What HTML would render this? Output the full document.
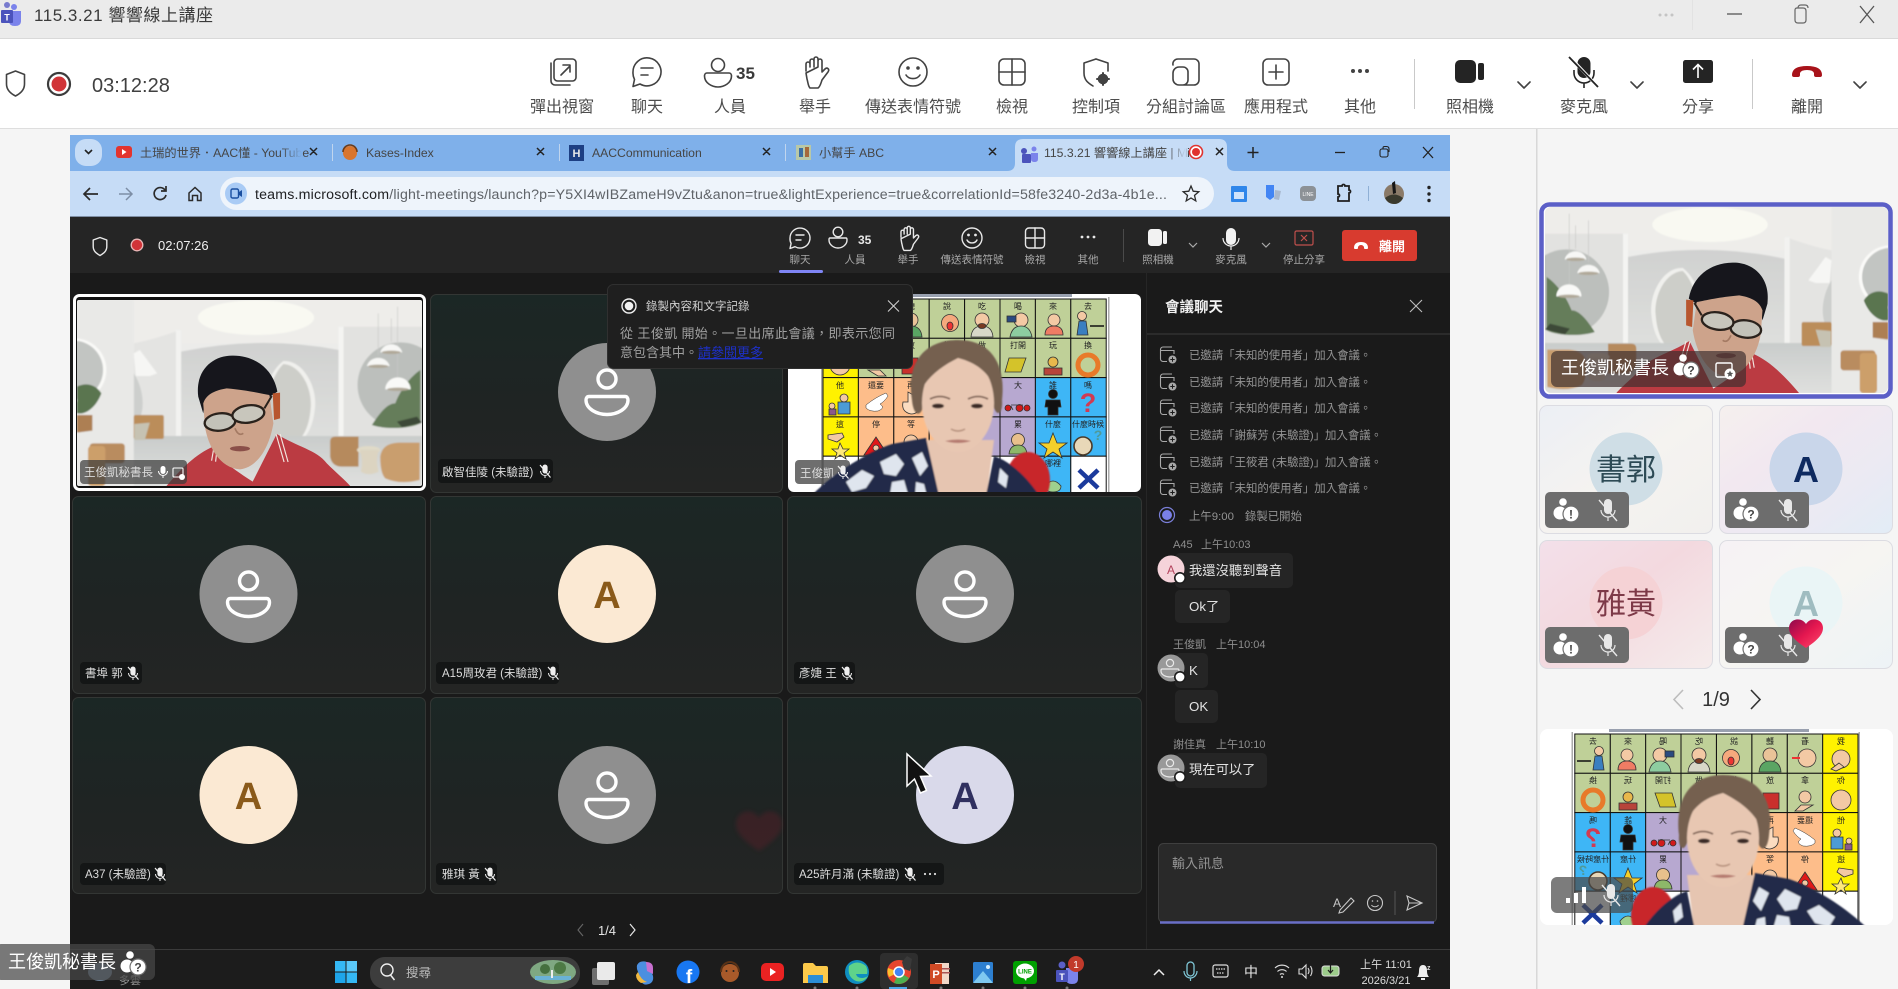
<!DOCTYPE html>
<html lang="zh-Hant"><head><meta charset="utf-8"><title>115.3.21 響響線上講座</title>
<style>
html,body{margin:0;padding:0;width:1898px;height:989px;overflow:hidden;background:#f5f5f5}
svg{display:block;font-family:"Liberation Sans","Noto Sans CJK TC",sans-serif}
.l{font-size:16px;fill:#4d4d4d;text-anchor:middle}
.d{font-size:10.5px;fill:#a9a9a9;text-anchor:middle}
.i{fill:none;stroke:#424242;stroke-width:1.6;stroke-linecap:round;stroke-linejoin:round}
.w{fill:none;stroke:#e8e8e8;stroke-width:1.4;stroke-linecap:round;stroke-linejoin:round}
.t{font-size:12.2px;fill:#454545}
.n{font-size:11.5px;fill:#dcdcdc}
.s{font-size:11.4px;fill:#949494}
.h{font-size:11px;fill:#8e8e8e}
.m{font-size:13.3px;fill:#e2e2e2}
.c{font-size:8px;fill:#222;text-anchor:middle}
</style></head><body>
<svg width="1898" height="989" viewBox="0 0 1898 989" xmlns="http://www.w3.org/2000/svg">
<defs>
<linearGradient id="tg" x1="0" y1="0" x2="0" y2="1"><stop offset="0" stop-color="#1b2725"/><stop offset=".55" stop-color="#1f2423"/><stop offset="1" stop-color="#242524"/></linearGradient>
<linearGradient id="fl" x1="0" y1="0" x2="0" y2="1"><stop offset="0" stop-color="#c9cccb"/><stop offset="1" stop-color="#dfe0de"/></linearGradient>
<linearGradient id="wl" x1="0" y1="0" x2="0" y2="1"><stop offset="0" stop-color="#d0d1d0"/><stop offset="1" stop-color="#dedfdd"/></linearGradient>
<linearGradient id="r1" x1="0" y1="0" x2="1" y2="1"><stop offset="0" stop-color="#eceff5"/><stop offset=".5" stop-color="#f5f3f0"/><stop offset="1" stop-color="#f1f0ee"/></linearGradient>
<linearGradient id="r2" x1="0" y1="0" x2="1" y2="1"><stop offset="0" stop-color="#f5f0ee"/><stop offset=".35" stop-color="#f2e8f0"/><stop offset=".7" stop-color="#ebeaf3"/><stop offset="1" stop-color="#e2ecf6"/></linearGradient>
<linearGradient id="r3" x1="0" y1="0" x2="1" y2="1"><stop offset="0" stop-color="#f3e0ea"/><stop offset=".45" stop-color="#f3d9df"/><stop offset="1" stop-color="#f5ecec"/></linearGradient>
<linearGradient id="r4" x1="0" y1="0" x2="1" y2="1"><stop offset="0" stop-color="#f6f2f5"/><stop offset=".5" stop-color="#f6f5f2"/><stop offset="1" stop-color="#edf3f6"/></linearGradient>
<linearGradient id="hg" x1="0" y1="0" x2="1" y2="1"><stop offset="0" stop-color="#8c0a4c"/><stop offset=".5" stop-color="#e4174f"/><stop offset="1" stop-color="#ff4a6c"/></linearGradient>
<linearGradient id="fade" x1="0" y1="0" x2="1" y2="0"><stop offset="0" stop-color="#7fb0ea" stop-opacity="0"/><stop offset="1" stop-color="#7fb0ea"/></linearGradient>
<linearGradient id="fade2" x1="0" y1="0" x2="1" y2="0"><stop offset="0" stop-color="#c6dcf6" stop-opacity="0"/><stop offset="1" stop-color="#c6dcf6"/></linearGradient>
<filter id="b1"><feGaussianBlur stdDeviation="2"/></filter>
<filter id="b2"><feGaussianBlur stdDeviation=".7"/></filter>
<filter id="b3"><feGaussianBlur stdDeviation="2"/></filter>
<clipPath id="c1"><rect x="77" y="300" width="345" height="186" rx="2"/></clipPath>
<clipPath id="c2"><rect x="788" y="294" width="353" height="198" rx="6"/></clipPath>
<clipPath id="c3"><rect x="1540" y="729" width="353" height="196" rx="8"/></clipPath>
<clipPath id="c4"><rect x="1545" y="207" width="343" height="186" rx="6"/></clipPath>

<g id="micoff"><rect x="-2.6" y="-6.5" width="5.2" height="9" rx="2.6" fill="#eee"/><path d="M-4.5,0a4.5,4.5 0 0 0 9,0M0,4.5v2.5" fill="none" stroke="#eee" stroke-width="1"/><path d="M-5,-6L5.5,6.5" stroke="#eee" stroke-width="1.2"/></g>
<g id="micoffb"><rect x="-4" y="-12" width="8" height="15" rx="4" fill="#e8e8e8"/><path d="M-7,-1a7,7 0 0 0 14,0M0,6v4" fill="none" stroke="#e8e8e8" stroke-width="1.2"/><path d="M-9,-11L9,10" stroke="#e8e8e8" stroke-width="1.4"/></g>
<g id="pers"><circle cx="0" cy="-13" r="9" fill="none" stroke="#fff" stroke-width="3.4"/><path d="M-18,4.5H18C20,4.5 21,6 21,8C21,17 10,22.5 0,22.5C-10,22.5 -21,17 -21,8C-21,6 -20,4.5 -18,4.5Z" fill="none" stroke="#fff" stroke-width="3.4"/></g>
<g id="persS"><circle cx="0" cy="-5" r="3.6" fill="none" stroke="#e8e8e8" stroke-width="1.2"/><path d="M-8,1H8C9,1 9,2 9,3C9,7 4,9 0,9C-4,9 -9,7 -9,3C-9,2 -9,1 -8,1Z" fill="none" stroke="#e8e8e8" stroke-width="1.2"/></g>
<g id="pq"><circle cx="-4" cy="-9" r="3.8" fill="#fff"/><circle cx="-7" cy="2" r="6.5" fill="#fff"/><circle cx="4" cy="3" r="8.6" fill="#6f6f6f"/><circle cx="4" cy="3" r="7.4" fill="#fff"/><text x="4" y="7.5" font-size="12" font-weight="700" fill="#444" text-anchor="middle">?</text></g>
<g id="pe"><circle cx="-4" cy="-9" r="3.8" fill="#fff"/><circle cx="-7" cy="2" r="6.5" fill="#fff"/><circle cx="4" cy="3" r="8.6" fill="#6f6f6f"/><circle cx="4" cy="3" r="7.4" fill="#fff"/><text x="4" y="7.5" font-size="12" font-weight="700" fill="#444" text-anchor="middle">!</text></g>
<g id="sys"><path d="M4,-8H-5a2.5,2.5 0 0 0 -2.5,2.5V4a2.5,2.5 0 0 0 2.5,2.5H-1M-7.5,-4.5H6V-1" fill="none" stroke="#a8a8a8" stroke-width="1.1"/><circle cx="4.5" cy="4.5" r="4" fill="#a8a8a8"/><path d="M2.3,4.5h4.4M4.5,2.3v4.4" stroke="#1b1b1b" stroke-width="1"/></g>
<g id="ava"><circle r="13.5" fill="#999"/><use href="#persS" transform="translate(-1,0)"/><circle cx="9" cy="9" r="6" fill="#1c1c1c"/><circle cx="9" cy="9" r="4.4" fill="#fff"/></g>

<symbol id="man" viewBox="22 30 1033 558" preserveAspectRatio="none">
<rect x="22" y="30" width="1033" height="558" fill="#ececea"/>
<g filter="url(#b1)">
<rect x="192" y="30" width="863" height="130" fill="#eeedea"/>
<ellipse cx="558" cy="83" rx="174" ry="52" fill="#f9f9f2"/>
<path d="M192,160C240,150 290,135 334,118V445H192Z" fill="#e4e4e2"/>
<rect x="318" y="120" width="16" height="325" fill="#f2f2f0"/>
<path d="M334,185Q570,135 806,180V440H334Z" fill="url(#wl)"/>
<path d="M540,440C580,330 590,250 640,213C700,210 740,290 735,350Q730,410 705,440Z" fill="#f0f0ed"/>
<path d="M560,440C590,340 600,260 640,222C690,225 725,290 722,350Q718,410 695,440Z" fill="#cdcec9"/>
<path d="M192,250C225,300 230,380 192,405Z" fill="#cdcfcd"/>
<rect x="805" y="110" width="250" height="340" fill="#e2e2e0"/>
<rect x="805" y="110" width="15" height="340" fill="#f4f4f2"/>
<circle cx="990" cy="285" r="128" fill="#bcbfbc"/>
<path d="M905,405C940,350 960,340 975,340C990,300 1020,260 1050,240V400C1020,415 950,420 905,405Z" fill="#657d5a"/>
<path d="M980,395l60,-15l15,18l-60,14z" fill="#3d4a38"/>
<path d="M924,70V195M963,85V155M982,50V265" stroke="#c9c9c7" stroke-width="2"/>
<path d="M890,228a35,32 0 0 1 68,0z" fill="#f7f7f5"/><ellipse cx="924" cy="229" rx="30" ry="5" fill="#b0a898"/>
<path d="M930,187a34,32 0 0 1 66,0z" fill="#f7f7f5"/><ellipse cx="963" cy="187" rx="28" ry="5" fill="#b0a898"/>
<path d="M945,298a38,36 0 0 1 76,0z" fill="#f9f9f7"/><ellipse cx="983" cy="298" rx="32" ry="5" fill="#b0a898"/>
<rect x="22" y="30" width="170" height="558" fill="#e9e9e7"/>
<circle cx="15" cy="240" r="95" fill="#fafaf8"/>
<circle cx="12" cy="240" r="88" fill="#c2c5c2"/>
<path d="M22,290C50,275 80,285 95,310C80,350 50,375 22,370Z" fill="#5a7550"/>
<path d="M22,375H68V422L22,428Z" fill="#ad7f52"/>
<path d="M192,190L210,180L262,250L240,258H198Z" fill="#f6f6f4"/>
<rect x="192" y="438" width="863" height="150" fill="url(#fl)"/>
<rect x="192" y="375" width="90" height="72" rx="6" fill="#bb8d5a"/>
<path d="M194,402L240,398L225,450H194Z" fill="#c6c2b2"/>
<path d="M780,455Q780,440 795,440H865V530H815Q785,530 780,500Z" fill="#b68a5d"/>
<ellipse cx="895" cy="480" rx="35" ry="12" fill="#e0dac8"/><path d="M868,480Q880,510 872,545Q895,560 925,545Q915,510 926,480Z" fill="#dcd4c1"/>
<path d="M930,500Q935,460 985,458H1048V570Q990,585 945,565Q930,550 930,500Z" fill="#c99e6e"/>
<rect x="60" y="460" width="105" height="60" rx="10" fill="#b98c5e"/><rect x="55" y="468" width="52" height="120" rx="10" fill="#cc9f6b"/>
</g>
<g filter="url(#b2)">
<path d="M385,320C375,240 430,195 490,197C560,198 610,240 622,305L600,320C560,330 500,300 450,300C420,310 405,340 400,370Z" fill="#14181e"/>
<path d="M290,588C330,540 380,490 430,470L460,510C480,530 510,550 548,575L620,432C680,470 740,480 770,520C800,550 825,570 840,588Z" fill="#bb3a42"/>
<path d="M425,512L432,472M437,515L442,470M618,432L642,516M630,432L654,516" stroke="#f2e6e0" stroke-width="3.5"/>
<path d="M400,340C410,310 440,300 470,295C530,300 570,310 598,315L610,400C600,460 570,530 510,538C450,535 415,470 405,410Z" fill="#cda38b"/>
<path d="M608,310L630,308L630,385L612,390Z" fill="#b8562f"/>
<ellipse cx="450" cy="396" rx="46" ry="26" fill="#c3c2b9" stroke="#2a211c" stroke-width="7" transform="rotate(-6 450 396)"/>
<ellipse cx="535" cy="372" rx="48" ry="26" fill="#c8c6bc" stroke="#2a211c" stroke-width="7" transform="rotate(-8 535 372)"/>
<path d="M583,355L605,318" stroke="#2a211c" stroke-width="6"/>
<path d="M495,415Q505,440 520,430" fill="none" stroke="#a47a64" stroke-width="5"/>
<ellipse cx="510" cy="476" rx="30" ry="8" fill="#8a5048"/>
</g>
</symbol>

<g id="share">
<rect x="788" y="294" width="353" height="198" fill="#fff"/>
<rect x="872" y="294" width="200" height="3" fill="#55607a" opacity=".6"/>
<rect x="821" y="297" width="1.5" height="195" fill="#aaa"/><rect x="1108" y="297" width="1.5" height="195" fill="#aaa"/>
<g stroke="#111" stroke-width="1">
<rect x="823" y="299" width="35.4" height="39.3" fill="#fff200"/><rect x="858.4" y="299" width="35.4" height="39.3" fill="#bfd098"/><rect x="893.8" y="299" width="35.4" height="39.3" fill="#bfd098"/><rect x="929.2" y="299" width="35.4" height="39.3" fill="#bfd098"/><rect x="964.6" y="299" width="35.4" height="39.3" fill="#bfd098"/><rect x="1000" y="299" width="35.4" height="39.3" fill="#bfd098"/><rect x="1035.4" y="299" width="35.4" height="39.3" fill="#bfd098"/><rect x="1070.8" y="299" width="35.4" height="39.3" fill="#bfd098"/>
<rect x="823" y="338.3" width="35.4" height="39.3" fill="#fff200"/><rect x="858.4" y="338.3" width="35.4" height="39.3" fill="#bfd098"/><rect x="893.8" y="338.3" width="35.4" height="39.3" fill="#bfd098"/><rect x="929.2" y="338.3" width="35.4" height="39.3" fill="#bfd098"/><rect x="964.6" y="338.3" width="35.4" height="39.3" fill="#bfd098"/><rect x="1000" y="338.3" width="35.4" height="39.3" fill="#bfd098"/><rect x="1035.4" y="338.3" width="35.4" height="39.3" fill="#bfd098"/><rect x="1070.8" y="338.3" width="35.4" height="39.3" fill="#bfd098"/>
<rect x="823" y="377.6" width="35.4" height="39.3" fill="#fff200"/><rect x="858.4" y="377.6" width="35.4" height="39.3" fill="#fdbd8a"/><rect x="893.8" y="377.6" width="35.4" height="39.3" fill="#fdbd8a"/><rect x="929.2" y="377.6" width="35.4" height="39.3" fill="#fdbd8a"/><rect x="964.6" y="377.6" width="35.4" height="39.3" fill="#b7a8d0"/><rect x="1000" y="377.6" width="35.4" height="39.3" fill="#b7a8d0"/><rect x="1035.4" y="377.6" width="35.4" height="39.3" fill="#3eb6f6"/><rect x="1070.8" y="377.6" width="35.4" height="39.3" fill="#3eb6f6"/>
<rect x="823" y="416.9" width="35.4" height="39.3" fill="#fff200"/><rect x="858.4" y="416.9" width="35.4" height="39.3" fill="#fdbd8a"/><rect x="893.8" y="416.9" width="35.4" height="39.3" fill="#fdbd8a"/><rect x="929.2" y="416.9" width="35.4" height="39.3" fill="#fdbd8a"/><rect x="964.6" y="416.9" width="35.4" height="39.3" fill="#b7a8d0"/><rect x="1000" y="416.9" width="35.4" height="39.3" fill="#b7a8d0"/><rect x="1035.4" y="416.9" width="35.4" height="39.3" fill="#3eb6f6"/><rect x="1070.8" y="416.9" width="35.4" height="39.3" fill="#3eb6f6"/>
<rect x="823" y="456.2" width="35.4" height="39.3" fill="#fff"/><rect x="858.4" y="456.2" width="35.4" height="39.3" fill="#fff"/><rect x="893.8" y="456.2" width="35.4" height="39.3" fill="#fff"/><rect x="929.2" y="456.2" width="35.4" height="39.3" fill="#fff"/><rect x="964.6" y="456.2" width="35.4" height="39.3" fill="#fff"/><rect x="1000" y="456.2" width="35.4" height="39.3" fill="#fff"/><rect x="1035.4" y="456.2" width="35.4" height="39.3" fill="#3eb6f6"/><rect x="1070.8" y="456.2" width="35.4" height="39.3" fill="#fff"/>
</g>
<g>
<text class="c" x="840" y="309">我</text><text class="c" x="876" y="309">看</text><text class="c" x="911" y="309">聽</text><text class="c" x="947" y="309">說</text><text class="c" x="982" y="309">吃</text><text class="c" x="1018" y="309">喝</text><text class="c" x="1053" y="309">來</text><text class="c" x="1088" y="309">去</text>
<text class="c" x="840" y="348">你</text><text class="c" x="876" y="348">拿</text><text class="c" x="911" y="348">放</text><text class="c" x="947" y="348">想</text><text class="c" x="982" y="348">做</text><text class="c" x="1018" y="348">打開</text><text class="c" x="1053" y="348">玩</text><text class="c" x="1088" y="348">換</text>
<text class="c" x="840" y="388">他</text><text class="c" x="876" y="388">還要</text><text class="c" x="911" y="388">再</text><text class="c" x="1018" y="388">大</text><text class="c" x="1053" y="388">誰</text><text class="c" x="1088" y="388">嗎</text>
<text class="c" x="840" y="427">這</text><text class="c" x="876" y="427">停</text><text class="c" x="911" y="427">等</text><text class="c" x="1018" y="427">累</text><text class="c" x="1053" y="427">什麼</text><text class="c" x="1088" y="427" font-size="7">什麼時候</text>
<text class="c" x="1053" y="466">哪裡</text>
</g>
<g stroke="#333" stroke-width=".8">
<circle cx="840" cy="324" r="9" fill="#f3c9a4"/><path d="M842,328l8,6l-5,2l-8,-4z" fill="#f3c9a4"/>
<circle cx="874" cy="323" r="9" fill="#f3c9a4"/><path d="M881,323h8" stroke="#e33" stroke-width="2"/>
<circle cx="911" cy="320" r="7" fill="#e9c398"/><path d="M900,337q1,-11 11,-11q10,0 11,11z" fill="#5aa563"/>
<circle cx="950" cy="323" r="8.5" fill="#f5a97d"/><ellipse cx="950" cy="326" rx="3" ry="4" fill="#e33"/>
<circle cx="982" cy="320" r="7" fill="#f3c9a4"/><path d="M971,337q1,-11 11,-11q10,0 11,11z" fill="#d8d8c8"/><ellipse cx="982" cy="326" rx="4" ry="2.5" fill="#7a3a22"/>
<circle cx="1021" cy="320" r="7" fill="#f3c9a4"/><path d="M1010,337q2,-11 11,-11q9,0 11,11z" fill="#8dcda0"/><rect x="1007" y="316" width="9" height="6" fill="#2a4a80"/>
<circle cx="1054" cy="320" r="6" fill="#f3c9a4"/><path d="M1045,335q0,-9 9,-9q9,0 9,9z" fill="#ef7c64"/>
<circle cx="1082" cy="316" r="4.5" fill="#f3c9a4"/><path d="M1077,335l2,-14h7l2,14z" fill="#3a7fc0"/><path d="M1090,326h14" stroke="#111" stroke-width="1.5"/>
<circle cx="840" cy="365" r="10" fill="#f3c9a4"/>
<circle cx="876" cy="362" r="6" fill="#f3c9a4"/><path d="M868,370l10,6h8l-6,-6z" fill="#f3c9a4"/>
<rect x="902" y="358" width="16" height="16" fill="#c9302c"/>
<path d="M1005,372l4,-14h17l-5,14z" fill="#d4c32a"/>
<circle cx="1053" cy="362" r="5" fill="#e8b84c"/><rect x="1044" y="368" width="18" height="7" fill="#b8443a"/>
<circle cx="1088" cy="365" r="10" fill="none" stroke="#e87a2a" stroke-width="5"/>
<circle cx="844" cy="398" r="4" fill="#f3c9a4"/><path d="M838,414v-12h12v12z" fill="#4c9bd6"/><circle cx="832" cy="406" r="3" fill="#f3c9a4"/><rect x="829" y="409" width="7" height="6" fill="#8b5a8b"/>
<path d="M866,405q10,-8 20,-12l2,3q-4,6 -8,8q6,4 -2,7q-8,1 -12,-3z" fill="#fff" stroke-width=".5"/>
<path d="M908,392v10h-5q-2,10 8,12q8,0 8,-8v-8z" fill="#fbdcc0"/>
<path d="M1011,406l2,4M1011,405h12M1005,408a3,3 0 1 0 6,0a3,3 0 1 0 -6,0M1016,408a3.5,3.5 0 1 0 7,0a3.5,3.5 0 1 0 -7,0M1024,408a3,3 0 1 0 6,0a3,3 0 1 0 -6,0" fill="#d21a1a"/>
<circle cx="1053" cy="394" r="4.5" fill="#111"/><path d="M1046,400h14l1,7h-3v8h-10v-8h-3z" fill="#111"/>
<text x="1088" y="412" font-size="27" font-weight="700" text-anchor="middle" fill="#d23a52" stroke="none">?</text>
<path d="M828,435l14,-2l2,4l-7,5l-9,-3z" fill="#f3c9a4"/><path d="M840,443l3,6h6l-5,4l2,6l-6,-4l-5,4l2,-6l-5,-4h6z" fill="#ffe97a"/>
<path d="M876,437l12,18h-24z" fill="#e01818"/><circle cx="876" cy="448" r="3" fill="#f3c9a4"/>
<circle cx="911" cy="442" r="7" fill="#f3c9a4"/>
<circle cx="1018" cy="440" r="6.5" fill="#e8c08c"/><path d="M1009,454q1,-9 9,-9q8,0 9,9z" fill="#8db869"/>
<path d="M1053,433l4,10h10l-8,6l3,9l-9,-6l-9,6l3,-9l-8,-6h10z" fill="#f5cf2a"/>
<circle cx="1083" cy="446" r="9" fill="#e8d8b8" stroke="#4a3a2a" stroke-width="1.6"/><text x="1098" y="440" font-size="14" font-weight="700" fill="#4f9a9a" stroke="none" text-anchor="middle">?</text>
<path d="M1045,486q8,-10 16,0q0,6 -8,6q-8,0 -8,-6z" fill="#9fd08e"/>
</g>
<path d="M1079,470L1098,488M1098,470L1079,488" stroke="#1b3a9c" stroke-width="4.5"/>
</g>

<g id="woman">
<g filter="url(#b2)">
<ellipse cx="1028" cy="480" rx="22" ry="28" fill="#c8252a"/>
<path d="M926,440H994L986,500H936Z" fill="#e6c5b1"/>
<path d="M812,495C835,472 868,452 892,444L926,438L940,500H812Z" fill="#22294a"/>
<path d="M985,500L994,456C1012,462 1030,480 1042,500Z" fill="#22294a"/>
<path d="M846,482l16,-12l12,6l-8,12l-14,4zM880,462l16,-8l8,10l-8,12l-12,-2zM912,458l10,-6l6,14l-8,10zM892,482l12,-2l4,14h-18zM916,482l8,2l3,12h-12zM1000,468l8,8l-2,12l-8,-6z" fill="#dfe5ee"/>
<path d="M912,400C906,362 925,340 958,340C991,340 1006,364 1002,400C1003,412 998,418 994,408L990,390H926L922,410C918,418 913,412 912,400Z" fill="#75604f"/>
<ellipse cx="958" cy="403" rx="36" ry="49" fill="#e8c7b2"/>
<path d="M920,392C922,362 942,352 956,350C978,350 994,366 997,394C992,378 982,364 958,358C942,366 928,376 920,392Z" fill="#75604f"/>
<path d="M930,399q10,-5 20,0M968,399q10,-5 20,0" stroke="#6a4f42" stroke-width="1.6" fill="none"/>
<ellipse cx="938" cy="406" rx="6" ry="2.4" fill="#3a2c26"/><ellipse cx="977" cy="406" rx="6" ry="2.4" fill="#3a2c26"/>
<path d="M951,429q7,4 14,0" stroke="#b08a76" stroke-width="1.4" fill="none"/>
<path d="M945,441q13,-3 26,0q-13,4 -26,0" fill="#b57a70"/>
</g>
</g>
</defs>

<!-- page -->
<rect width="1898" height="989" fill="#f5f5f5"/>
<rect width="1898" height="38" fill="#ebebeb"/>
<rect y="38" width="1898" height="90" fill="#fff"/>
<rect y="38" width="1898" height="1" fill="#d9d9d9"/><rect y="128" width="1898" height="1" fill="#dedede"/>

<!-- teams logo -->
<circle cx="14" cy="7" r="3" fill="#7b83eb"/><circle cx="7" cy="5" r="3" fill="#5b5fc7" opacity=".8"/>
<path d="M9,11h12v10q0,5 -6,5q-6,0 -6,-5z" fill="#7b83eb"/><rect x="1" y="10" width="12" height="13" rx="1" fill="#4b53bc"/><text x="7" y="20.5" font-size="9" font-weight="700" fill="#fff" text-anchor="middle">T</text>
<text x="34" y="21" font-size="17" textLength="179" fill="#3a3a3a">115.3.21 響響線上講座</text>
<g fill="#c4c4c4"><circle cx="1660" cy="15" r="1.5"/><circle cx="1666" cy="15" r="1.5"/><circle cx="1672" cy="15" r="1.5"/></g>
<rect x="1692" y="0" width="1" height="30" fill="#e2e2e2"/>
<path d="M1727,14h15" stroke="#555" stroke-width="1.3"/>
<path d="M1795,10q0,-2 2,-2h6q3,0 3,3v9q0,3 -3,3h-5q-3,0 -3,-3zM1798,8q0,-3 3,-3h4q3,0 3,3" fill="none" stroke="#666" stroke-width="1.2"/>
<path d="M1860,6L1874,23M1874,6L1860,23" stroke="#555" stroke-width="1.3"/>

<!-- left -->
<path d="M15.5,73l9,3.5v9.5c0,6 -4,9.5 -9,12c-5,-2.5 -9,-6 -9,-12v-9.5z" class="i" transform="translate(0,-2)"/>
<circle cx="59" cy="84" r="11" fill="none" stroke="#3c3c3c" stroke-width="2.2"/><circle cx="59" cy="84" r="7.5" fill="#d13438"/>
<text x="92" y="92" font-size="20" fill="#404040">03:12:28</text>

<!-- toolbar icons -->
<g transform="translate(563,72)" class="i"><rect x="-9" y="-13" width="22" height="22" rx="3.5"/><path d="M-12,-9v18a4,4 0 0 0 4,4h15M-2,3L7,-6M0,-7h7v7"/></g>
<g transform="translate(647,72)" class="i"><path d="M-14,0a14,14 0 1 1 7,12l-7,2.5l1.5,-7a14,14 0 0 1 -1.5,-7.5z"/><path d="M-6,-4h12M-6,3h7"/></g>
<g transform="translate(718,72)" class="i"><circle cy="-7" r="6.5"/><path d="M-11,1H11C13,1 13.5,3 13.5,4C13.5,11 6,15 0,15C-6,15 -13.5,11 -13.5,4C-13.5,3 -13,1 -11,1Z"/></g>
<text x="736" y="79" font-size="17" font-weight="700" fill="#3a3a3a">35</text>
<g transform="translate(815,72)" class="i"><path d="M-9,-1v-7a2,2 0 0 1 4,0v3M-5,-5v-6a2,2 0 0 1 4,0v6M-1,-5v-8a2,2 0 0 1 4,0v8M3,-5v-6a2,2 0 0 1 4,0v11l3,-3c2,-2 5,0 3,3l-6,8c-1,3 -2,7 -4,8h-8c-2,-2 -2,-6 -3,-9l-1,-6z"/></g>
<g transform="translate(913,72)" class="i"><circle r="14"/><path d="M-7,3a8,7 0 0 0 14,0"/><circle cx="-5" cy="-4" r="1" fill="#424242"/><circle cx="5" cy="-4" r="1" fill="#424242"/></g>
<g transform="translate(1012,72)" class="i"><rect x="-13" y="-13" width="26" height="26" rx="5"/><path d="M0,-13v26M-13,0h26"/></g>
<g transform="translate(1096,72)" class="i"><path d="M0,-13l12,4v8M-12,-9l12,-4M-12,-9v10c0,7 4,10 9,13"/><circle cx="7" cy="7" r="4.5" fill="#424242"/><path d="M7,1v12M1,7h12" stroke-width="2"/></g>
<g transform="translate(1186,72)" class="i"><path d="M-13,-7a5,5 0 0 1 5,-6h16a5,5 0 0 1 5,5v16a5,5 0 0 1 -5,5h-15a6,6 0 0 1 -6,-6v-6a6,6 0 0 1 6,-6h4a5,5 0 0 1 5,5v8a5,5 0 0 1 -5,5"/></g>
<g transform="translate(1276,72)" class="i"><rect x="-13" y="-13" width="26" height="26" rx="5"/><path d="M0,-7v14M-7,0h14"/></g>
<g fill="#424242"><circle cx="1353" cy="71" r="2"/><circle cx="1360" cy="71" r="2"/><circle cx="1367" cy="71" r="2"/></g>
<rect x="1414" y="59" width="1" height="50" fill="#c9c9c9"/><rect x="1752" y="59" width="1" height="50" fill="#c9c9c9"/>
<rect x="1455" y="60" width="21" height="23" rx="5" fill="#242424"/><rect x="1478" y="63" width="6" height="17" rx="2" fill="#242424"/>
<path d="M1518,82l6,6l6,-6M1631,82l6,6l6,-6M1854,82l6,6l6,-6" class="i"/>
<g transform="translate(1584,72)"><rect x="-6.5" y="-15" width="13" height="21" rx="6.5" fill="#242424"/><path d="M-10,-2v3a10,10 0 0 0 20,0v-3M0,11v5" fill="none" stroke="#242424" stroke-width="1.6"/><path d="M-15,-16L15,16" stroke="#fff" stroke-width="3"/><path d="M-15,-15L14,15" stroke="#242424" stroke-width="1.8"/></g>
<rect x="1683" y="60" width="30" height="23" rx="2.5" fill="#242424"/><path d="M1698,78v-13M1693,69.5l5,-5l5,5" fill="none" stroke="#fff" stroke-width="1.6"/>
<path d="M1792,75q0,-9 15,-9q15,0 15,9q0,2 -2,2h-4q-2,0 -2,-2v-2q-1,-3 -7,-3q-6,0 -7,3v2q0,2 -2,2h-4q-2,0 -2,-2z" fill="#a8131a"/>
<text class="l" x="562" y="112">彈出視窗</text><text class="l" x="647" y="112">聊天</text><text class="l" x="730" y="112">人員</text><text class="l" x="815" y="112">舉手</text><text class="l" x="913" y="112">傳送表情符號</text><text class="l" x="1012" y="112">檢視</text><text class="l" x="1096" y="112">控制項</text><text class="l" x="1186" y="112">分組討論區</text><text class="l" x="1276" y="112">應用程式</text><text class="l" x="1360" y="112">其他</text><text class="l" x="1470" y="112">照相機</text><text class="l" x="1584" y="112">麥克風</text><text class="l" x="1698" y="112">分享</text><text class="l" x="1807" y="112">離開</text>
<rect x="1536" y="129" width="1.5" height="860" fill="#d8d8d8"/>

<!-- browser -->
<rect x="70" y="135" width="1380" height="854" fill="#1a1a1a"/>
<rect x="70" y="135" width="1380" height="36" fill="#7fb0ea"/>
<rect x="70" y="171" width="1380" height="45" fill="#c6dcf6"/>
<rect x="70" y="216" width="1380" height="1" fill="#7f8fa5"/>
<rect x="70" y="217" width="1380" height="56" fill="#252525"/>
<rect x="75" y="139" width="27" height="27" rx="11" fill="#c6dcf6"/>
<path d="M85,150l3.5,3.5l3.5,-3.5" fill="none" stroke="#222" stroke-width="1.6"/>
<rect x="116" y="146" width="16" height="12" rx="3" fill="#e3342f"/><path d="M122,149v6l4.5,-3z" fill="#fff"/>
<text class="t" x="140" y="157">土瑞的世界．AAC懂 - YouTube</text><rect x="280" y="142" width="22" height="22" fill="url(#fade)"/>
<path d="M310,148l7,7M317,148l-7,7M537,148l7,7M544,148l-7,7M763,148l7,7M770,148l-7,7M989,148l7,7M996,148l-7,7" stroke="#222" stroke-width="1.5"/>
<rect x="332" y="144" width="1" height="17" fill="#c0d5ee"/><rect x="559" y="144" width="1" height="17" fill="#c0d5ee"/><rect x="785" y="144" width="1" height="17" fill="#c0d5ee"/>
<circle cx="350" cy="153" r="7" fill="#d9752e"/><path d="M343,152a7,7 0 0 1 14,0" fill="none" stroke="#6b3a16" stroke-width="1.6"/>
<text class="t" x="366" y="157">Kases-Index</text>
<rect x="569" y="145" width="15" height="16" fill="#1d3f83"/><text x="576.5" y="157" font-size="11" fill="#e8e8e8" font-weight="700" text-anchor="middle">H</text>
<text class="t" x="592" y="157">AACCommunication</text>
<rect x="796" y="145" width="15" height="15" fill="#b8c8a8"/><rect x="799" y="148" width="4" height="9" fill="#3a6ea5"/><rect x="805" y="147" width="4" height="10" fill="#a5683a"/>
<text class="t" x="819" y="157">小幫手 ABC</text>
<path d="M1007,171q8,0 8,-8v-16q0,-8 8,-8h196q8,0 8,8v16q0,8 8,8z" fill="#c6dcf6"/>
<circle cx="1024" cy="151" r="3" fill="#4b53bc"/><rect x="1022" y="154" width="9" height="9" rx="1" fill="#4b53bc"/><circle cx="1034" cy="149" r="2.5" fill="#7b83eb"/><path d="M1031,153h7v6q0,3 -3.500,3q-3.500,0 -3.500,-3z" fill="#7b83eb"/>
<text class="t" x="1044" y="157">115.3.21 響響線上講座 | Mi</text><rect x="1166" y="142" width="20" height="22" fill="url(#fade2)"/>
<circle cx="1196" cy="152" r="6.500" fill="#fff" stroke="#e0332f" stroke-width="1.600"/><circle cx="1196" cy="152" r="4" fill="#e0332f"/>
<path d="M1216,148l7,7M1223,148l-7,7" stroke="#222" stroke-width="1.500"/>
<path d="M1253,147v11M1247.500,152.500h11" stroke="#222" stroke-width="1.500"/>
<path d="M1335,152.500h10" stroke="#222" stroke-width="1.300"/>
<rect x="1380" y="149" width="8" height="8" rx="2" fill="none" stroke="#222" stroke-width="1.100"/><path d="M1383,149v-1q0,-1.500 1.500,-1.500h2q2.500,0 2.500,2.500v3" fill="none" stroke="#222" stroke-width="1.100"/>
<path d="M1423,147l10,11M1433,147l-10,11" stroke="#222" stroke-width="1.300"/>
<!-- nav -->
<path d="M98,194H84M90,188l-6,6l6,6" fill="none" stroke="#2b2b2b" stroke-width="1.700"/>
<path d="M119,194h13M126,188l6,6l-6,6" fill="none" stroke="#7d8ea5" stroke-width="1.500"/>
<path d="M165,190a6,6 0 1 0 1,5M166,186v5h-5" fill="none" stroke="#2b2b2b" stroke-width="1.700"/>
<path d="M189,193l6,-5.500l6,5.500v7.500h-3.500v-5h-5v5h-3.500z" fill="none" stroke="#2b2b2b" stroke-width="1.500"/>
<rect x="220" y="177" width="994" height="33" rx="16.500" fill="#eef4fb"/>
<circle cx="236" cy="193.500" r="11" fill="#a9cbf5"/><rect x="231" y="189" width="7.500" height="9" rx="1.500" fill="none" stroke="#1a4fa0" stroke-width="1.400"/><path d="M239,192l3,-2v7l-3,-2z" fill="#1a4fa0"/>
<text x="255" y="199" font-size="14.200" textLength="912" lengthAdjust="spacing" fill="#5f6368"><tspan fill="#202124">teams.microsoft.com</tspan>/light-meetings/launch?p=Y5XI4wIBZameH9vZtu&amp;anon=true&amp;lightExperience=true&amp;correlationId=58fe3240-2d3a-4b1e...</text>
<path d="M1191,186l2.200,5.200l5.600,.5l-4.300,3.700l1.300,5.500l-4.800,-2.900l-4.800,2.900l1.300,-5.500l-4.300,-3.700l5.600,-.5z" fill="none" stroke="#2b2b2b" stroke-width="1.300"/>
<rect x="1231" y="186" width="16" height="16" rx="1" fill="#2f86ea"/><rect x="1234" y="192" width="10" height="7" fill="#cfe3fb"/>
<path d="M1266,185h8v12l-4,3l-4,-3z" fill="#4285f4"/><path d="M1275,190l6,1l-2,9l-5,-1z" fill="#a9b9cf"/>
<rect x="1300" y="186" width="16" height="15" rx="4" fill="#8c9196"/><text x="1308" y="196" font-size="5" fill="#fff" text-anchor="middle">LINE</text>
<path d="M1338,186h4a1.500,1.500 0 0 1 3,0h4v4a1.500,1.500 0 0 1 0,3v8h-11v-4a1.500,1.500 0 0 0 0,-3z" fill="none" stroke="#1f1f1f" stroke-width="1.800"/>
<rect x="1368" y="186" width="1" height="15" fill="#8fb0d5"/>
<circle cx="1394" cy="194" r="10" fill="#8a7a68"/><path d="M1392,183l3,-2l1,12l-3,1z" fill="#161616"/><path d="M1385,198q9,-7 18,0q-3,6 -9,6q-6,0 -9,-6z" fill="#3a3a2e"/>
<g fill="#222"><circle cx="1429" cy="187.500" r="1.700"/><circle cx="1429" cy="194" r="1.700"/><circle cx="1429" cy="200.500" r="1.700"/></g>
<!-- teams bar -->
<path d="M100,239.500l6.800,2.500v6.500c0,4.500 -3,6.800 -6.800,9c-3.800,-2.200 -6.800,-4.500 -6.800,-9v-6.500z" class="w" transform="translate(0,-2)"/>
<circle cx="137" cy="245" r="5.800" fill="#d13438" stroke="#e9b7b7" stroke-width="1.300"/>
<text x="158" y="250" font-size="13" fill="#f0f0f0">02:07:26</text>
<g transform="translate(800,238)" class="w"><path d="M-10,0a10,10 0 1 1 5,8.700l-5,1.800l1.100,-5a10,10 0 0 1 -1.100,-5.500z"/><path d="M-4,-3h8M-4,2h5"/></g>
<g transform="translate(838,238)" class="w"><circle cx="0" cy="-6" r="4.800"/><path d="M-8,0H8C9,0 9,1 9,2C9,7 4,10 0,10C-4,10 -9,7 -9,2C-9,1 -9,0 -8,0Z"/></g>
<text x="858" y="244" font-size="12" font-weight="700" fill="#e8e8e8">35</text>
<g transform="translate(908,238) scale(.78)" class="w" style="stroke-width:1.800"><path d="M-9,-1v-7a2,2 0 0 1 4,0v3M-5,-5v-6a2,2 0 0 1 4,0v6M-1,-5v-8a2,2 0 0 1 4,0v8M3,-5v-6a2,2 0 0 1 4,0v11l3,-3c2,-2 5,0 3,3l-6,8c-1,3 -2,7 -4,8h-8c-2,-2 -2,-6 -3,-9l-1,-6z"/></g>
<g transform="translate(972,238)" class="w"><circle r="10"/><path d="M-5,2a5.500,5 0 0 0 10,0"/><circle cx="-3.500" cy="-3" r=".7" fill="#e8e8e8"/><circle cx="3.500" cy="-3" r=".7" fill="#e8e8e8"/></g>
<g transform="translate(1035,238)" class="w"><rect x="-9.500" y="-10" width="19" height="20" rx="3.500"/><path d="M0,-10v20M-9.500,0h19"/></g>
<g fill="#e8e8e8"><circle cx="1082" cy="237" r="1.400"/><circle cx="1088" cy="237" r="1.400"/><circle cx="1094" cy="237" r="1.400"/></g>
<rect x="1123" y="229" width="1" height="33" fill="#4a4a4a"/>
<rect x="1148" y="229" width="14" height="17" rx="3.500" fill="#f2f2f2"/><rect x="1163" y="231" width="4" height="13" rx="1.500" fill="#f2f2f2"/>
<path d="M1189,243l4,4l4,-4M1262,243l4,4l4,-4" fill="none" stroke="#aaa" stroke-width="1.200"/>
<rect x="1226" y="228" width="10" height="17" rx="5" fill="#f2f2f2"/><path d="M1223,238a8,8 0 0 0 16,0M1231,246v4" fill="none" stroke="#f2f2f2" stroke-width="1.200"/>
<rect x="1295" y="231" width="18" height="14" rx="1.500" fill="none" stroke="#c0504d" stroke-width="1.200"/><path d="M1301,235l6,6M1307,235l-6,6" stroke="#c0504d" stroke-width="1.200"/>
<rect x="779" y="270" width="44" height="3" rx="1.500" fill="#7f85f5"/>
<text class="d" x="800" y="263">聊天</text><text class="d" x="855" y="263">人員</text><text class="d" x="908" y="263">舉手</text><text class="d" x="972" y="263">傳送表情符號</text><text class="d" x="1035" y="263">檢視</text><text class="d" x="1088" y="263">其他</text><text class="d" x="1158" y="263">照相機</text><text class="d" x="1231" y="263">麥克風</text><text class="d" x="1304" y="263">停止分享</text>
<rect x="1342" y="230" width="75" height="31" rx="3" fill="#d83b2f"/>
<path d="M1354,248q0,-6 7,-6q7,0 7,6q0,1 -1,1h-2q-1,0 -1,-1v-1q-1,-2 -3,-2q-2,0 -3,2v1q0,1 -1,1h-2q-1,0 -1,-1z" fill="#fff"/>
<text x="1379" y="251" font-size="13" font-weight="700" fill="#fff">離開</text>

<!-- tiles -->
<g fill="url(#tg)" stroke="#333634" stroke-width="1">
<rect x="430.500" y="294.500" width="352" height="198" rx="6"/>
<rect x="72.500" y="496.500" width="353" height="197" rx="6"/><rect x="430.500" y="496.500" width="352" height="197" rx="6"/><rect x="787.500" y="496.500" width="354" height="197" rx="6"/>
<rect x="72.500" y="697.500" width="353" height="196" rx="6"/><rect x="430.500" y="697.500" width="352" height="196" rx="6"/><rect x="787.500" y="697.500" width="354" height="196" rx="6"/>
</g>
<!-- tile 1 -->
<rect x="74.500" y="295.500" width="350" height="194" rx="5" fill="#111" stroke="#fff" stroke-width="3"/>
<g clip-path="url(#c1)"><use href="#man" x="77" y="300" width="345" height="186"/></g>
<rect x="80" y="460" width="107" height="24" rx="4" fill="#3c3c3c" opacity=".72"/>
<text class="n" x="84" y="476">王俊凱秘書長</text>
<rect x="160.500" y="466" width="5" height="8" rx="2.500" fill="#fff"/><path d="M158.500,471a4.500,4.500 0 0 0 9,0M163,476v2" fill="none" stroke="#fff" stroke-width="1"/>
<rect x="173" y="468" width="10" height="9" rx="1" fill="none" stroke="#fff" stroke-width="1.100"/><circle cx="182" cy="477" r="3" fill="#fff"/>
<!-- tile 3 -->
<g clip-path="url(#c2)"><use href="#share"/>
<rect x="795" y="460" width="55" height="24" rx="4" fill="#555" opacity=".85"/>
<text class="n" x="800" y="477">王俊凱</text>
<use href="#woman"/>
<use href="#micoff" transform="translate(843,472)"/></g>
<!-- avatars -->
<circle cx="248.500" cy="392" r="0" fill="none"/>
<circle cx="607" cy="392" r="49" fill="#8f8f8f"/><use href="#pers" transform="translate(607,392)"/>
<circle cx="248.500" cy="594" r="49" fill="#8f8f8f"/><use href="#pers" transform="translate(248.500,594)"/>
<circle cx="607" cy="594" r="49" fill="#fbe9d3"/><text x="607" y="608" font-size="38" font-weight="700" fill="#8a5a1a" text-anchor="middle">A</text>
<circle cx="965" cy="594" r="49" fill="#8f8f8f"/><use href="#pers" transform="translate(965,594)"/>
<circle cx="248.500" cy="795" r="49" fill="#fbe9d3"/><text x="248.500" y="809" font-size="38" font-weight="700" fill="#8a5a1a" text-anchor="middle">A</text>
<circle cx="607" cy="795" r="49" fill="#8f8f8f"/><use href="#pers" transform="translate(607,795)"/>
<circle cx="965" cy="795" r="49" fill="#d9d9ea"/><text x="965" y="809" font-size="38" font-weight="700" fill="#2f2f5f" text-anchor="middle">A</text>
<path d="M759,851c-16,-11 -23,-18 -23,-27c0,-14 17,-17 23,-6c6,-11 23,-8 23,6c0,9 -7,16 -23,27z" fill="#6d1f2a" opacity=".33" filter="url(#b3)"/>
<!-- labels -->
<g fill="#141616">
<rect x="438" y="459" width="115" height="24" rx="4"/>
<rect x="80" y="662" width="62" height="22" rx="4"/><rect x="436" y="662" width="123" height="22" rx="4"/><rect x="794" y="662" width="61" height="22" rx="4"/>
<rect x="80" y="863" width="86" height="22" rx="4"/><rect x="436" y="863" width="61" height="22" rx="4"/><rect x="794" y="863" width="150" height="22" rx="4"/>
</g>
<text class="n" x="442" y="476">啟智佳陵 (未驗證)</text><use href="#micoff" transform="translate(545,471)"/>
<text class="n" x="85" y="677" font-size="10.500">書埠 郭</text><use href="#micoff" transform="translate(133,673)"/>
<text class="n" x="442" y="677" font-size="10.500">A15周玫君 (未驗證)</text><use href="#micoff" transform="translate(553,673)"/>
<text class="n" x="799" y="677" font-size="10.500">彥婕 王</text><use href="#micoff" transform="translate(847,673)"/>
<text class="n" x="85" y="878" font-size="10.500">A37 (未驗證)</text><use href="#micoff" transform="translate(160,874)"/>
<text class="n" x="442" y="878" font-size="10.500">雅琪 黃</text><use href="#micoff" transform="translate(490,874)"/>
<text class="n" x="799" y="878" font-size="10.500">A25許月滿 (未驗證)</text><use href="#micoff" transform="translate(910,874)"/>
<g fill="#ddd"><circle cx="925" cy="874" r="1.100"/><circle cx="930" cy="874" r="1.100"/><circle cx="935" cy="874" r="1.100"/></g>
<!-- cursor -->
<path d="M907,754l0,32l7.500,-7l6,14l6,-2.500l-6,-14l10.500,-.5z" fill="#111" stroke="#fff" stroke-width="1.500"/>
<!-- popup -->
<rect x="607.500" y="284.500" width="305" height="84" rx="6" fill="#1f1f1f" stroke="#303030"/>
<circle cx="629" cy="306" r="7" fill="none" stroke="#f0f0f0" stroke-width="1.400"/><circle cx="629" cy="306" r="4.300" fill="#f0f0f0"/>
<text x="646" y="310" font-size="11.500" fill="#d0d0d0">錄製內容和文字記錄</text>
<path d="M888,300.500l11,11M899,300.500l-11,11" stroke="#cfcfcf" stroke-width="1.100"/>
<text x="620" y="338" font-size="13" textLength="275" fill="#a0a0a0">從 王俊凱 開始。一旦出席此會議，即表示您同</text>
<text x="620" y="357" font-size="13" fill="#a0a0a0">意包含其中。<tspan fill="#1d30c8" text-decoration="underline">請參閱更多</tspan></text>
<!-- chat -->
<rect x="1146" y="273" width="1" height="676" fill="#262626"/>
<text x="1165" y="312" font-size="14.500" font-weight="700" fill="#f2f2f2">會議聊天</text>
<path d="M1410,300l12,12M1422,300l-12,12" stroke="#bdbdbd" stroke-width="1.100"/>
<rect x="1147" y="333.500" width="303" height="1" fill="#3c3c3c"/>
<use href="#sys" transform="translate(1168,355)"/><text class="s" x="1189" y="359">已邀請「未知的使用者」加入會議。</text>
<use href="#sys" transform="translate(1168,382)"/><text class="s" x="1189" y="386">已邀請「未知的使用者」加入會議。</text>
<use href="#sys" transform="translate(1168,408)"/><text class="s" x="1189" y="412">已邀請「未知的使用者」加入會議。</text>
<use href="#sys" transform="translate(1168,435)"/><text class="s" x="1189" y="439">已邀請「謝蘇芳 (未驗證)」加入會議。</text>
<use href="#sys" transform="translate(1168,462)"/><text class="s" x="1189" y="466">已邀請「王筱君 (未驗證)」加入會議。</text>
<use href="#sys" transform="translate(1168,488)"/><text class="s" x="1189" y="492">已邀請「未知的使用者」加入會議。</text>
<circle cx="1167" cy="515" r="7.500" fill="none" stroke="#7a7fd8" stroke-width="1.200"/><circle cx="1167" cy="515" r="5" fill="#7a7fe8"/>
<text class="s" x="1189" y="520">上午9:00</text><text class="s" x="1245" y="520">錄製已開始</text>
<text class="h" x="1173" y="548">A45</text><text class="h" x="1201" y="548">上午10:03</text>
<rect x="1175" y="553" width="118" height="35" rx="5" fill="#252525"/><rect x="1175" y="590" width="55" height="33" rx="5" fill="#252525"/>
<circle cx="1171" cy="569" r="13.500" fill="#f5d3da"/><text x="1171" y="574" font-size="12" fill="#b3425c" text-anchor="middle">A</text><circle cx="1180" cy="578" r="6" fill="#1c1c1c"/><circle cx="1180" cy="578" r="4.400" fill="#fff"/>
<text class="m" x="1189" y="575">我還沒聽到聲音</text><text class="m" x="1189" y="611">Ok了</text>
<text class="h" x="1173" y="648">王俊凱</text><text class="h" x="1216" y="648">上午10:04</text>
<rect x="1175" y="653" width="33" height="35" rx="5" fill="#252525"/><rect x="1175" y="690" width="43" height="33" rx="5" fill="#252525"/>
<use href="#ava" transform="translate(1171,668)"/>
<text class="m" x="1189" y="675">K</text><text class="m" x="1189" y="711">OK</text>
<text class="h" x="1173" y="748">謝佳真</text><text class="h" x="1216" y="748">上午10:10</text>
<rect x="1175" y="753" width="92" height="35" rx="5" fill="#252525"/>
<use href="#ava" transform="translate(1171,768)"/>
<text class="m" x="1189" y="774">現在可以了</text>
<rect x="1158.500" y="843.500" width="278" height="79" rx="5" fill="#292929" stroke="#3f3f3f"/>
<path d="M1160,922.500h274" stroke="#6a6fc7" stroke-width="2.400"/>
<text x="1172" y="868" font-size="13" fill="#979797">輸入訊息</text>
<text x="1337" y="907" font-size="12" fill="#c8c8c8" text-anchor="middle">A</text><path d="M1340,910l11,-12l3,3l-11,11l-4,1z" fill="none" stroke="#c8c8c8" stroke-width="1.100"/>
<circle cx="1375" cy="903" r="7.500" fill="none" stroke="#c8c8c8" stroke-width="1.100"/><path d="M1371.500,905a4,3.500 0 0 0 7,0" fill="none" stroke="#c8c8c8"/><circle cx="1372.500" cy="901" r=".8" fill="#c8c8c8"/><circle cx="1377.500" cy="901" r=".8" fill="#c8c8c8"/>
<rect x="1394.500" y="891" width="1" height="24" fill="#555"/>
<path d="M1407,896l15,7l-15,7l2,-7zM1409,903h13" fill="none" stroke="#c8c8c8" stroke-width="1.100"/>
<!-- pager -->
<path d="M583,924l-5,6l5,6" fill="none" stroke="#666" stroke-width="1.100"/><path d="M630,924l5,6l-5,6" fill="none" stroke="#e6e6e6" stroke-width="1.200"/>
<text x="607" y="935" font-size="13" fill="#e6e6e6" text-anchor="middle">1/4</text>
<!-- taskbar -->
<rect x="70" y="949" width="1380" height="40" fill="#1c1c1c"/><rect x="70" y="949" width="1380" height="1" fill="#3b3b3b"/>
<ellipse cx="100" cy="972" rx="12" ry="9" fill="#6d8298"/>
<text x="130" y="984" font-size="11" fill="#9a9a9a" text-anchor="middle">多雲</text>
<g fill="#35b8f4"><rect x="335" y="961" width="10.500" height="10.500"/><rect x="346.500" y="961" width="10.500" height="10.500" fill="#5ac8f8"/><rect x="335" y="972.500" width="10.500" height="10.500" fill="#1ea5ea"/><rect x="346.500" y="972.500" width="10.500" height="10.500" fill="#35b8f4"/></g>
<rect x="370" y="957" width="210" height="32" rx="15" fill="#3d3d3d"/>
<circle cx="387" cy="970" r="6" fill="none" stroke="#eee" stroke-width="1.400"/><path d="M390.500,975l4,5" stroke="#eee" stroke-width="1.500"/>
<text x="406" y="977" font-size="12.500" fill="#bbb">搜尋</text>
<ellipse cx="553" cy="972" rx="23" ry="12" fill="#7fa882"/><circle cx="545" cy="969" r="5" fill="#45703f"/><circle cx="560" cy="968" r="6" fill="#4d7a45"/><rect x="535" y="976" width="36" height="4" fill="#6ab2d5"/><rect x="551" y="970" width="2" height="8" fill="#eee"/>
<rect x="592" y="968" width="17" height="17" rx="2" fill="#6f6f6f"/><rect x="597" y="962" width="18" height="18" rx="2" fill="#eaeaea"/>
<path d="M640,962q6,-2 9,2l4,12q1,6 -4,8q-6,2 -8,-3l-4,-12q-1,-5 3,-7z" fill="#4b8fe0"/><path d="M646,962q7,0 7,6v6l-6,-3z" fill="#c86fd0"/><path d="M638,972q3,8 9,10l-6,1q-5,-3 -5,-8z" fill="#f0b840"/>
<circle cx="688" cy="972" r="11.500" fill="#1877f2"/><text x="689" y="983" font-size="19" font-weight="700" fill="#fff" text-anchor="middle">f</text>
<circle cx="730" cy="973" r="9" fill="#a85a2a"/><path d="M721,972a9,10 0 0 1 18,0" fill="none" stroke="#5a3216" stroke-width="2"/><circle cx="726.500" cy="971" r="1" fill="#222"/><circle cx="733.500" cy="971" r="1" fill="#222"/>
<rect x="761" y="963" width="23" height="18" rx="5" fill="#ea2222"/><path d="M770,968v8l6,-4z" fill="#fff"/>
<path d="M803,965q0,-2 2,-2h8l3,3h10q2,0 2,2v15h-25z" fill="#fbc94a"/><rect x="808" y="975" width="15" height="8" fill="#2b8ed6"/>
<g transform="translate(-1,0)"><circle cx="858" cy="972" r="12" fill="#0f8ec0"/><path d="M850,966q8,-7 17,0q2,4 1,8h-11q1,4 6,4q3,0 6,-2q-4,7 -12,5q-9,-4 -7,-15z" fill="#5fd38a"/></g>
<g transform="translate(-2,0)"><rect x="882" y="953" width="38" height="36" rx="4" fill="#2e2e2e"/>
<circle cx="901" cy="972" r="12" fill="#e5452f"/><path d="M901,972l10,6a12,12 0 0 1 -15,5z" fill="#4caf50"/><path d="M901,972l-10,5a12,12 0 0 1 -1,-9z" fill="#fbc02d"/><circle cx="901" cy="972" r="5" fill="#4285f4" stroke="#fff" stroke-width="1.500"/>
<path d="M904,962l5,-6l5,3l-2,12l-6,-2z" fill="#3a3a3a"/>
<rect x="891" y="987" width="18" height="2" fill="#4aa5e8"/></g>
<g transform="translate(-3,0)"><rect x="938" y="963" width="14" height="21" fill="#f2d8c8"/><path d="M933,964h12v20h-12z" fill="#d04a25"/><text x="939" y="978" font-size="11" font-weight="700" fill="#fff" text-anchor="middle">P</text><rect x="945" y="968" width="8" height="1.500" fill="#a55"/><rect x="945" y="972" width="8" height="1.500" fill="#a55"/></g>
<g transform="translate(-3,0)"><rect x="976" y="962" width="20" height="21" rx="1.500" fill="#2d7fd0"/><path d="M976,983l10,-12l10,12z" fill="#7fc8f0"/><circle cx="991" cy="967" r="2" fill="#d5efff"/></g>
<g transform="translate(-4,0)"><rect x="1017" y="961" width="24" height="23" rx="3" fill="#00a000"/><ellipse cx="1029" cy="971" rx="9" ry="7.500" fill="#fff"/><path d="M1027,977l3,4l1,-4z" fill="#fff"/><text x="1029" y="973.500" font-size="6" font-weight="700" fill="#00a000" text-anchor="middle">LINE</text></g>
<g transform="translate(-5,0)"><circle cx="1077" cy="963" r="3" fill="#7b83eb"/><path d="M1071,968h12v11q0,5 -6,5q-6,0 -6,-5z" fill="#7b83eb"/><circle cx="1067" cy="965" r="3.500" fill="#5b5fc7"/><rect x="1061" y="970" width="12" height="12" rx="1" fill="#4b53bc"/><text x="1067" y="980" font-size="9" font-weight="700" fill="#fff" text-anchor="middle">T</text>
<circle cx="1081" cy="964" r="8" fill="#c13a2b"/><text x="1081" y="968" font-size="10" fill="#fff" text-anchor="middle">1</text></g>
<g fill="#777"><circle cx="815" cy="988" r="1.500"/><circle cx="857" cy="988" r="1.500"/><circle cx="941" cy="988" r="1.500"/><circle cx="983" cy="988" r="1.500"/><circle cx="1025" cy="988" r="1.500"/><circle cx="1067" cy="988" r="1.500"/></g>
<path d="M1154,975l5,-5l5,5" fill="none" stroke="#eee" stroke-width="1.500"/>
<g transform="translate(-6,0)"><rect x="1193" y="962" width="7" height="14" rx="3.500" fill="none" stroke="#80c8d8" stroke-width="1.300"/><path d="M1190,971a6.500,7 0 0 0 13,0M1196.500,978v3" fill="none" stroke="#80c8d8" stroke-width="1.200"/></g>
<g transform="translate(-7,0)"><rect x="1220" y="965" width="15" height="12" rx="2" fill="none" stroke="#ddd" stroke-width="1.200"/><path d="M1223,969h9M1224,973h7" stroke="#ddd" stroke-width="1.200" stroke-dasharray="1.500 1"/></g>
<text x="1251" y="977" font-size="14" fill="#e6e6e6" text-anchor="middle">中</text>
<g transform="translate(-8,0)"><path d="M1283,968a10,10 0 0 1 14,0M1285.500,971.500a6.500,6.500 0 0 1 9,0M1288,974.500a3,3 0 0 1 4,0" fill="none" stroke="#ddd" stroke-width="1.200"/><circle cx="1290" cy="977" r="1" fill="#ddd"/></g>
<g transform="translate(-8,0)"><path d="M1307,969h3l4,-4v13l-4,-4h-3z" fill="none" stroke="#ddd" stroke-width="1.100"/><path d="M1316,968q2,3 0,6M1318.500,966q3,5 0,10" fill="none" stroke="#ddd" stroke-width="1.100"/></g>
<g transform="translate(-9,0)"><rect x="1331" y="966" width="17" height="10" rx="2.500" fill="#9ccb8b" stroke="#ddd"/><path d="M1339.500,963v10M1337,970l2.500,3l2.500,-3" fill="none" stroke="#1c1c1c" stroke-width="1.200"/></g>
<text x="1386" y="968" font-size="11" fill="#ddd" text-anchor="middle">上午 11:01</text><text x="1386" y="984" font-size="11" fill="#ddd" text-anchor="middle">2026/3/21</text>
<g transform="translate(-10,0)"><path d="M1427,977q2,-2 2,-6q0,-6 4,-6q4,0 4,6q0,4 2,6z" fill="#eee"/><rect x="1431" y="978" width="4" height="2" fill="#eee"/><text x="1437" y="970" font-size="7" font-weight="700" fill="#ddd">z</text></g>
<!-- overlay name -->
<rect x="-5" y="944" width="160" height="36" rx="6" fill="#484848" opacity=".72"/>
<text x="8" y="968" font-size="18" fill="#fff">王俊凱秘書長</text>
<use href="#pq" transform="translate(134,964)"/>

<!-- right panel -->
<rect x="1541.500" y="204.500" width="349" height="192" rx="8" fill="#fff" stroke="#5b5fc7" stroke-width="4.500"/>
<g clip-path="url(#c4)"><use href="#man" transform="translate(1888,207) scale(-1,1)" width="343" height="186"/></g>
<rect x="1551" y="351" width="195" height="36" rx="6" fill="#3b2d2d" opacity=".68"/>
<text x="1561" y="374" font-size="18" fill="#fff">王俊凱秘書長</text>
<use href="#pq" transform="translate(1687,367)"/>
<rect x="1716" y="363" width="16" height="14" rx="1.500" fill="none" stroke="#fff" stroke-width="1.400"/><circle cx="1730" cy="374" r="5.500" fill="#fff"/><path d="M1730,370.500l1,2.300l2.300,.2l-1.800,1.500l.6,2.300l-2.100,-1.200l-2.100,1.200l.6,-2.300l-1.800,-1.500l2.300,-.2z" fill="#555"/>
<rect x="1539.500" y="405.500" width="173" height="128" rx="8" fill="url(#r1)" stroke="#dcdce2"/>
<rect x="1719.500" y="405.500" width="173" height="128" rx="8" fill="url(#r2)" stroke="#dcdce2"/>
<rect x="1539.500" y="540.500" width="173" height="128" rx="8" fill="url(#r3)" stroke="#dcdce2"/>
<rect x="1719.500" y="540.500" width="173" height="128" rx="8" fill="url(#r4)" stroke="#dcdce2"/>
<circle cx="1626" cy="469" r="36.500" fill="#cfdee6"/><text x="1626" y="480" font-size="30" fill="#2d4a55" text-anchor="middle">書郭</text>
<circle cx="1806" cy="469" r="36.500" fill="#c9d6ea"/><text x="1806" y="482" font-size="36" font-weight="700" fill="#0e2a60" text-anchor="middle">A</text>
<circle cx="1626" cy="603" r="36.500" fill="#f5d2d5"/><text x="1626" y="614" font-size="30" fill="#7d3a48" text-anchor="middle">雅黃</text>
<circle cx="1806" cy="603" r="36.500" fill="#eaf5f6"/><text x="1806" y="616" font-size="36" font-weight="700" fill="#9fbcc0" text-anchor="middle">A</text>
<g fill="#6d6d6d"><rect x="1545" y="492" width="84" height="36" rx="5"/><rect x="1725" y="492" width="84" height="36" rx="5"/><rect x="1545" y="627" width="84" height="36" rx="5"/><rect x="1725" y="627" width="84" height="36" rx="5"/></g>
<use href="#pe" transform="translate(1567,511)"/><use href="#micoffb" transform="translate(1608,511)"/>
<use href="#pq" transform="translate(1747,511)"/><use href="#micoffb" transform="translate(1788,511)"/>
<use href="#pe" transform="translate(1567,646)"/><use href="#micoffb" transform="translate(1608,646)"/>
<use href="#pq" transform="translate(1747,646)"/><use href="#micoffb" transform="translate(1788,646)"/>
<path d="M1806,648c-12,-8 -17,-14 -17,-20c0,-9 12,-12 17,-4c5,-8 17,-5 17,4c0,6 -5,12 -17,20z" fill="url(#hg)"/>
<path d="M1683,690l-9,9.500l9,9.500" fill="none" stroke="#bdbdbd" stroke-width="1.600"/><path d="M1751,690l9,9.500l-9,9.500" fill="none" stroke="#333" stroke-width="1.600"/>
<text x="1716" y="706" font-size="20" fill="#333" text-anchor="middle">1/9</text>
<g clip-path="url(#c3)"><g transform="translate(2681,435) scale(-1,1)"><use href="#share"/><use href="#woman"/></g></g>
<rect x="1551" y="877" width="82" height="36" rx="6" fill="#4a4a4a" opacity=".72"/>
<g fill="#fff"><rect x="1566" y="898" width="4" height="5"/><rect x="1574" y="893" width="4" height="10"/><rect x="1582" y="887" width="4" height="16"/></g>
<use href="#micoffb" transform="translate(1611,896)"/>
</svg>
</body></html>
